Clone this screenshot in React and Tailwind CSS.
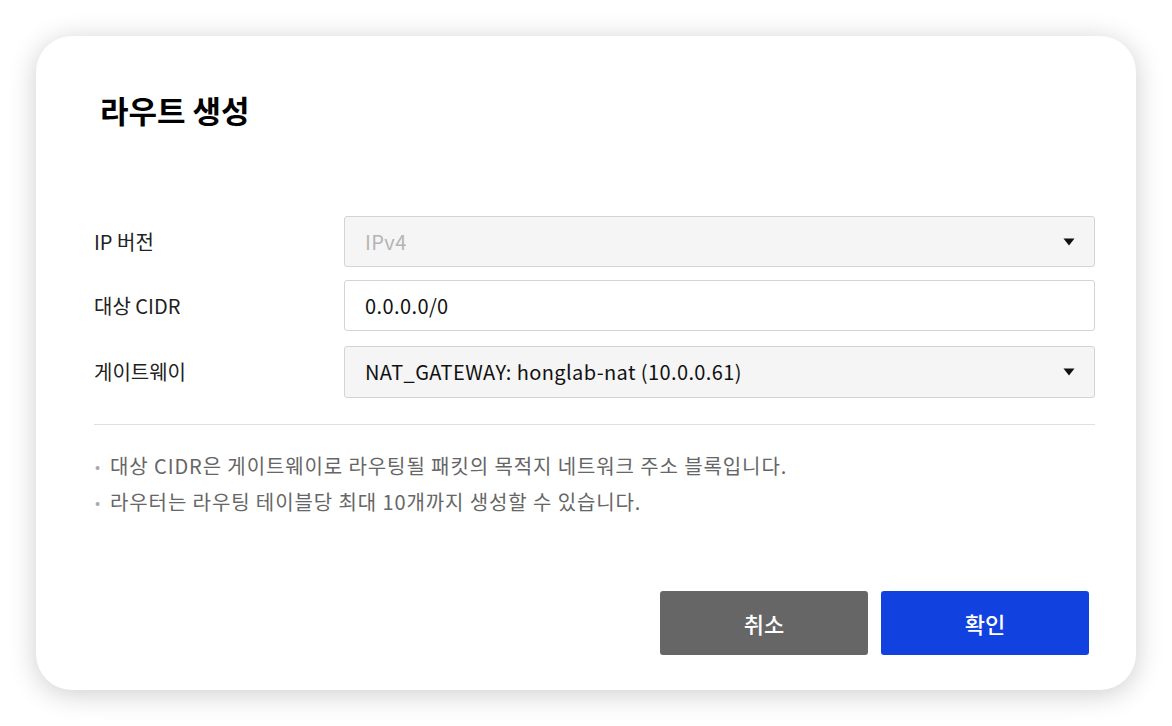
import React from "react";

const FONT = { fontFamily: '"Noto Sans CJK KR", "Noto Sans", sans-serif' };

function Caret() {
  return (
    <svg width="12" height="8" viewBox="0 0 12 8" className="shrink-0">
      <path d="M0.5 0.5 L11.5 0.5 L6 7.5 Z" fill="#111" />
    </svg>
  );
}

function Field({ label, children }) {
  return (
    <div className="flex items-center">
      <div className="w-[250px] text-[20px] text-[#222]">{label}</div>
      {children}
    </div>
  );
}

export default function App() {
  return (
    <div className="w-[1172px] h-[726px] bg-white pt-[36px] pl-[36px]" style={FONT}>
      <div className="w-[1100px] h-[654px] bg-white rounded-[36px] shadow-[0_4px_28px_rgba(0,0,0,0.2)] flex flex-col pl-[58px] pr-[41px]">
        <h1 className="pt-[54px] pl-[6px] text-[31px] leading-[40px] font-bold text-black">라우트 생성</h1>

        <div className="mt-[86px] flex flex-col">
          <Field label="IP 버전">
            <div className="flex-1 h-[51px] flex items-center justify-between pl-[20px] pr-[19px] bg-[#f5f5f5] border border-[#d4d4d4] rounded-[3px]">
              <span className="text-[20px] tracking-[0.02em] text-[#b4b4b4]">IPv4</span>
              <Caret />
            </div>
          </Field>
          <div className="mt-[13px]">
            <Field label="대상 CIDR">
              <div className="flex-1 h-[51px] flex items-center px-[20px] bg-white border border-[#d4d4d4] rounded-[3px]">
                <span className="text-[20px] tracking-[0.02em] text-[#111]">0.0.0.0/0</span>
              </div>
            </Field>
          </div>
          <div className="mt-[15px]">
            <Field label="게이트웨이">
              <div className="flex-1 h-[52px] flex items-center justify-between pl-[20px] pr-[19px] bg-[#f5f5f5] border border-[#d4d4d4] rounded-[3px]">
                <span className="text-[20px] tracking-[0.02em] text-[#111]">NAT_GATEWAY: honglab-nat (10.0.0.61)</span>
                <Caret />
              </div>
            </Field>
          </div>
        </div>

        <div className="mt-[26px] border-t border-[#e0e0e0]" />

        <ul className="mt-[26px] flex flex-col gap-[6px] text-[20px] tracking-[0.045em] text-[#666]">
          <li className="flex items-center">
            <span className="w-[16px] text-[#aaa] text-[15px] pl-[1px]">•</span>
            대상 CIDR은 게이트웨이로 라우팅될 패킷의 목적지 네트워크 주소 블록입니다.
          </li>
          <li className="flex items-center">
            <span className="w-[16px] text-[#aaa] text-[15px] pl-[1px]">•</span>
            라우터는 라우팅 테이블당 최대 10개까지 생성할 수 있습니다.
          </li>
        </ul>

        <div className="mt-auto mb-[35px] flex justify-end gap-[13px] pr-[6px]">
          <button className="w-[208px] h-[64px] rounded-[3px] bg-[#666666] text-white text-[22px] font-medium">취소</button>
          <button className="w-[208px] h-[64px] rounded-[3px] bg-[#1142e0] text-white text-[22px] font-medium">확인</button>
        </div>
      </div>
    </div>
  );
}
